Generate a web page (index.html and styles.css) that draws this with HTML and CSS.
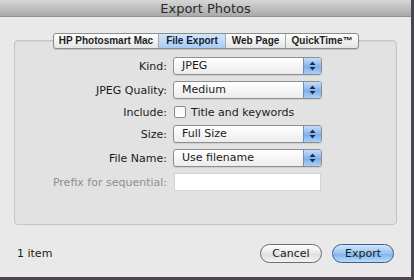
FILE: index.html
```html
<!DOCTYPE html>
<html lang="en">
<head>
    <meta charset="UTF-8">
    <title>Export Photos</title>
    <link rel="stylesheet" href="styles.css">
</head>
<body>
    <div class="window">
        <div class="titlebar">Export Photos</div>

        <div class="content">
            <div class="group">
                <div class="tabs">
                    <div class="tab tab-hp">HP Photosmart Mac</div>
                    <div class="tab tab-file selected">File Export</div>
                    <div class="tab tab-web">Web Page</div>
                    <div class="tab tab-qt">QuickTime™</div>
                </div>

                <div class="form">
                    <div class="row">
                        <label class="label">Kind:</label>
                        <div class="popup">
                            <span class="popup-value">JPEG</span>
                            <span class="popup-arrows">
                                <svg width="7" height="10" viewBox="0 0 7 10"><path d="M3.5 0.5 L6.5 4 L0.5 4 Z M3.5 9.5 L6.5 6 L0.5 6 Z" fill="#1c2e4a"/></svg>
                            </span>
                        </div>
                    </div>
                    <div class="row">
                        <label class="label">JPEG Quality:</label>
                        <div class="popup">
                            <span class="popup-value">Medium</span>
                            <span class="popup-arrows">
                                <svg width="7" height="10" viewBox="0 0 7 10"><path d="M3.5 0.5 L6.5 4 L0.5 4 Z M3.5 9.5 L6.5 6 L0.5 6 Z" fill="#1c2e4a"/></svg>
                            </span>
                        </div>
                    </div>
                    <div class="row row-check">
                        <label class="label">Include:</label>
                        <span class="checkbox"></span>
                        <span class="check-text">Title and keywords</span>
                    </div>
                    <div class="row">
                        <label class="label">Size:</label>
                        <div class="popup">
                            <span class="popup-value">Full Size</span>
                            <span class="popup-arrows">
                                <svg width="7" height="10" viewBox="0 0 7 10"><path d="M3.5 0.5 L6.5 4 L0.5 4 Z M3.5 9.5 L6.5 6 L0.5 6 Z" fill="#1c2e4a"/></svg>
                            </span>
                        </div>
                    </div>
                    <div class="row">
                        <label class="label">File Name:</label>
                        <div class="popup">
                            <span class="popup-value">Use filename</span>
                            <span class="popup-arrows">
                                <svg width="7" height="10" viewBox="0 0 7 10"><path d="M3.5 0.5 L6.5 4 L0.5 4 Z M3.5 9.5 L6.5 6 L0.5 6 Z" fill="#1c2e4a"/></svg>
                            </span>
                        </div>
                    </div>
                    <div class="row">
                        <label class="label disabled">Prefix for sequential:</label>
                        <div class="textfield"></div>
                    </div>
                </div>
            </div>

            <div class="footer">
                <span class="count">1 item</span>
                <div class="buttons">
                    <button class="btn">Cancel</button>
                    <button class="btn default">Export</button>
                </div>
            </div>
        </div>
    </div>
</body>
</html>
```

FILE: styles.css
```css
* {
    margin: 0;
    padding: 0;
    box-sizing: border-box;
}

body {
    background: #4a4550;
    font-family: "DejaVu Sans", sans-serif;
    font-size: 11px;
    color: #1a1a1a;
}

.window {
    width: 411px;
    height: 277px;
    background: #e9e9e9;
    display: flex;
    flex-direction: column;
    overflow: hidden;
}

.titlebar {
    height: 17px;
    background: linear-gradient(#d6d6d6, #a9a9a9);
    border-bottom: 1px solid #8e8e8e;
    text-align: center;
    font-size: 13px;
    line-height: 17px;
    color: #2a2a2a;
}

.content {
    flex: 1;
    padding: 15px 14px 0 14px;
    display: flex;
    flex-direction: column;
}

/* group box with tabs sitting on its top edge */
.group {
    position: relative;
    margin-top: 8px;
    height: 185px;
    border: 1px solid #c4c4c4;
    border-radius: 4px;
    background: #e2e2e2;
    box-shadow: inset 0 1px 1px rgba(0, 0, 0, 0.06);
}

.tabs {
    position: absolute;
    top: -8px;
    left: 38px;
    display: flex;
    height: 16px;
    border: 1px solid #8c8c8c;
    border-radius: 3px;
    overflow: hidden;
    background: linear-gradient(#ffffff, #e4e4e4);
    box-shadow: 0 1px 1px rgba(0, 0, 0, 0.15);
}

.tab {
    font-family: "Liberation Sans", sans-serif;
    font-weight: bold;
    font-size: 10px;
    line-height: 14px;
    text-align: center;
    white-space: nowrap;
    color: #1e1e1e;
    border-left: 1px solid #a8a8a8;
}

.tab-hp {
    width: 104px;
    border-left: none;
}

.tab-file {
    width: 67px;
}

.tab-web {
    width: 60px;
}

.tab-qt {
    width: 73px;
}

.tab.selected {
    background: linear-gradient(#d4e6fb, #a9cbf1);
    color: #0d1f3a;
}

.form {
    padding-top: 16px;
    display: flex;
    flex-direction: column;
    gap: 6px;
}

.row {
    display: flex;
    align-items: center;
    height: 18px;
}

.label {
    width: 158px;
    text-align: right;
    padding-right: 6px;
    color: #1a1a1a;
}

.label.disabled {
    color: #8e8e8e;
}

.popup {
    width: 149px;
    height: 18px;
    display: flex;
    border: 1px solid #8e8e8e;
    border-radius: 3px;
    background: linear-gradient(#ffffff, #ececec);
    overflow: hidden;
    box-shadow: 0 1px 0 rgba(0, 0, 0, 0.08);
}

.popup-value {
    flex: 1;
    padding-left: 8px;
    line-height: 16px;
}

.popup-arrows {
    width: 18px;
    display: flex;
    align-items: center;
    justify-content: center;
    background: linear-gradient(#c8defa, #7fb0ec 55%, #a9cff6);
    border-left: 1px solid #6d8fbd;
}

.row-check {
    height: 14px;
}

.checkbox {
    width: 12px;
    height: 12px;
    margin-left: 1px;
    border: 1px solid #8a8a8a;
    border-radius: 2px;
    background: linear-gradient(#f6f6f6, #ffffff);
}

.check-text {
    margin-left: 5px;
}

.textfield {
    width: 147px;
    height: 18px;
    margin-left: 1px;
    background: #ffffff;
    border: 1px solid #d4d4d4;
}

.footer {
    display: flex;
    align-items: center;
    justify-content: space-between;
    padding: 19px 3px 0 3px;
}

.count {
    font-size: 11px;
}

.buttons {
    display: flex;
    gap: 10px;
}

.btn {
    width: 62px;
    height: 19px;
    border: 1px solid #6c6c6c;
    border-radius: 10px;
    background: linear-gradient(#ffffff, #e6e6e6 50%, #dcdcdc 51%, #f4f4f4);
    font-family: "DejaVu Sans", sans-serif;
    font-size: 11px;
    color: #1a1a1a;
}

.btn.default {
    border-color: #3d5f8e;
    background: linear-gradient(#d2e6fc, #97c3f1 50%, #7bb1ec 51%, #b9dcfb);
}
```
